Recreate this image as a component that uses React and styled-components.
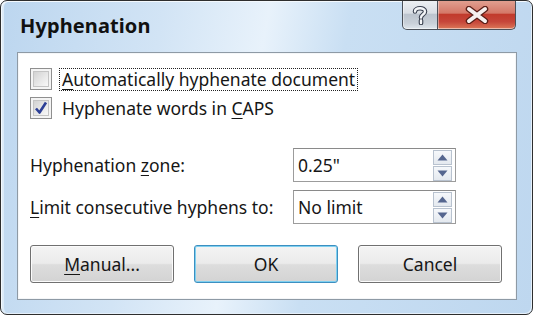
import React from "react";
import styled, { createGlobalStyle } from "styled-components";

const Global = createGlobalStyle`
  html, body { margin: 0; padding: 0; background: #ffffff; }
  body { font-family: "Noto Sans", "DejaVu Sans", sans-serif; }
`;

const FONT = `"Noto Sans", "DejaVu Sans", sans-serif`;

const Window = styled.div`
  box-sizing: border-box;
  width: 533px;
  height: 315px;
  border: 1px solid #2e2e2e;
  border-radius: 7px;
  background: linear-gradient(100deg, #bcd6ef 0%, #d2e4f5 28%, #e8f2fb 46%, #c9dff3 60%, #bed7ef 100%);
  box-shadow: inset 1px 1px 0 #f4f9fd, inset -1px -1px 0 #e6f0fa, inset 3px 0 0 #dcebf8;
  display: flex;
  flex-direction: column;
  overflow: hidden;
`;

const TitleBar = styled.div`
  height: 51px;
  display: flex;
  justify-content: space-between;
  align-items: flex-start;
  padding: 0 16px 0 19px;
`;

const Title = styled.div`
  font-family: ${FONT};
  font-weight: 700;
  font-size: 20px;
  color: #111;
  margin-top: 11px;
  letter-spacing: 0.1px;
`;

const Captions = styled.div`
  display: flex;
  margin-top: -1px;
`;

const CaptionButton = styled.div`
  box-sizing: border-box;
  height: 30px;
  width: ${(p) => p.$w}px;
  border: 1px solid #4b5058;
  border-top: none;
  display: flex;
  align-items: center;
  justify-content: center;
  background: ${(p) =>
    p.$close
      ? "linear-gradient(180deg, #e2a293 0%, #d47868 45%, #c13a2c 50%, #c6463a 75%, #dc7858 100%)"
      : "linear-gradient(180deg, #eef1f4 0%, #d9dee4 45%, #bcc4ce 50%, #c9d0d8 80%, #dfe6ec 100%)"};
  border-radius: ${(p) => (p.$close ? "0 0 5px 0" : "0 0 0 5px")};
  ${(p) => (p.$close ? "border-left: none;" : "")}
  box-shadow: inset 0 -1px 0 rgba(255,255,255,0.5), inset 1px 0 0 rgba(255,255,255,0.4);
`;

const Panel = styled.div`
  box-sizing: border-box;
  margin: 0 15px 0 16px;
  height: 248px;
  background: #ffffff;
  border: 1px solid #8e9aa5;
  box-shadow: inset 0 0 0 1px #f4f6f8;
  display: flex;
  flex-direction: column;
  padding: 14px 12px 0 12px;
`;

const CheckRow = styled.div`
  display: flex;
  align-items: center;
  height: 24px;
  margin-bottom: ${(p) => p.$mb || 0}px;
`;

const Box = styled.div`
  box-sizing: border-box;
  width: 22px;
  height: 22px;
  border: 1px solid #8f8f8f;
  background: #f4f4f4;
  padding: 2px;
  display: flex;
  flex: none;
`;

const BoxInner = styled.div`
  flex: 1;
  border: 1px solid #c4c4c4;
  background: linear-gradient(135deg, #d2d2d2 0%, #e8e8e8 55%, #f8f8f8 100%);
  display: flex;
  align-items: center;
  justify-content: center;
`;

const Label = styled.span`
  font-family: ${FONT};
  font-size: 17.5px;
  color: #161616;
  white-space: nowrap;
  line-height: 21px;
`;

const CheckLabel = styled(Label)`
  margin-left: 7px;
  padding: 0 2px;
  border: 1px dotted ${(p) => (p.$focus ? "#222" : "transparent")};
`;

const U = styled.span`
  text-decoration: underline;
  text-underline-offset: 3px;
`;

const FieldRow = styled.div`
  display: flex;
  align-items: center;
  height: 34px;
  margin-top: ${(p) => p.$mt}px;
`;

const FieldLabel = styled(Label)`
  width: 263px;
  flex: none;
`;

const Spin = styled.div`
  box-sizing: border-box;
  width: 163px;
  height: 34px;
  border: 1px solid #9c9c9c;
  border-top-color: #8a8a8a;
  background: #fff;
  display: flex;
  align-items: center;
  padding: 0 2px 0 4px;
`;

const SpinText = styled(Label)`
  flex: 1;
`;

const SpinBtns = styled.div`
  display: flex;
  flex-direction: column;
  gap: 1px;
  width: 19px;
  margin-right: 1px;
`;

const SpinBtn = styled.div`
  box-sizing: border-box;
  height: 15px;
  border: 1px solid #b8c2cf;
  background: linear-gradient(180deg, #f6f8fb 0%, #e4e9ef 100%);
  display: flex;
  align-items: center;
  justify-content: center;
`;

const Buttons = styled.div`
  display: flex;
  gap: 20px;
  margin-top: 21px;
`;

const Button = styled.div`
  box-sizing: border-box;
  width: 144px;
  height: 38px;
  border: 1px solid ${(p) => (p.$default ? "#3c8fc0" : "#707070")};
  border-radius: 3px;
  background: linear-gradient(180deg, #f4f4f4 0%, #ebebeb 48%, #dddddd 52%, #d3d3d3 100%);
  box-shadow: inset 0 0 0 1px ${(p) => (p.$default ? "#7fd0f0" : "#fbfbfb")};
  display: flex;
  align-items: center;
  justify-content: center;
  font-family: ${FONT};
  font-size: 17.5px;
  color: #161616;
`;

const Arrow = ({ up }) => (
  <svg width="11" height="7" viewBox="0 0 11 7">
    <polygon points={up ? "5.5,0.5 10.5,6.5 0.5,6.5" : "0.5,0.5 10.5,0.5 5.5,6.5"} fill="#55668f" />
  </svg>
);

export default function App() {
  return (
    <>
      <Global />
      <Window>
        <TitleBar>
          <Title>Hyphenation</Title>
          <Captions>
            <CaptionButton $w={36}>
              <svg width="16" height="20" viewBox="0 0 16 20">
                <path
                  d="M3 6.5 C3 2.5 13 2 13 6.5 C13 9.5 9 9.5 9 12.5 M9 15.5 V18"
                  fill="none"
                  stroke="#3a4150"
                  strokeWidth="4.6"
                  strokeLinecap="round"
                />
                <path
                  d="M3 6.5 C3 2.5 13 2 13 6.5 C13 9.5 9 9.5 9 12.5 M9 15.5 V18"
                  fill="none"
                  stroke="#f4f6f8"
                  strokeWidth="2.4"
                  strokeLinecap="round"
                />
              </svg>
            </CaptionButton>
            <CaptionButton $w={78} $close>
              <svg width="24" height="18" viewBox="0 0 24 18">
                <path d="M4 3 L20 15 M20 3 L4 15" stroke="#5a1f18" strokeWidth="6.5" strokeLinecap="round" />
                <path d="M4 3 L20 15 M20 3 L4 15" stroke="#f6f0ee" strokeWidth="4" strokeLinecap="round" />
              </svg>
            </CaptionButton>
          </Captions>
        </TitleBar>
        <Panel>
          <CheckRow $mb={5}>
            <Box>
              <BoxInner />
            </Box>
            <CheckLabel $focus>
              <U>A</U>utomatically hyphenate document
            </CheckLabel>
          </CheckRow>
          <CheckRow>
            <Box>
              <BoxInner>
                <svg width="14" height="14" viewBox="0 0 14 14">
                  <path d="M2 7.5 L5.5 11.5 L12 1.5" fill="none" stroke="#2c3f96" strokeWidth="2.6" strokeLinejoin="round" />
                </svg>
              </BoxInner>
            </Box>
            <CheckLabel>
              Hyphenate words in <U>C</U>APS
            </CheckLabel>
          </CheckRow>
          <FieldRow $mt={28}>
            <FieldLabel>
              Hyphenation <U>z</U>one:
            </FieldLabel>
            <Spin>
              <SpinText>0.25"</SpinText>
              <SpinBtns>
                <SpinBtn><Arrow up /></SpinBtn>
                <SpinBtn><Arrow /></SpinBtn>
              </SpinBtns>
            </Spin>
          </FieldRow>
          <FieldRow $mt={8}>
            <FieldLabel>
              <U>L</U>imit consecutive hyphens to:
            </FieldLabel>
            <Spin>
              <SpinText>No limit</SpinText>
              <SpinBtns>
                <SpinBtn><Arrow up /></SpinBtn>
                <SpinBtn><Arrow /></SpinBtn>
              </SpinBtns>
            </Spin>
          </FieldRow>
          <Buttons>
            <Button>
              <span><U>M</U>anual...</span>
            </Button>
            <Button $default>OK</Button>
            <Button>Cancel</Button>
          </Buttons>
        </Panel>
      </Window>
    </>
  );
}
